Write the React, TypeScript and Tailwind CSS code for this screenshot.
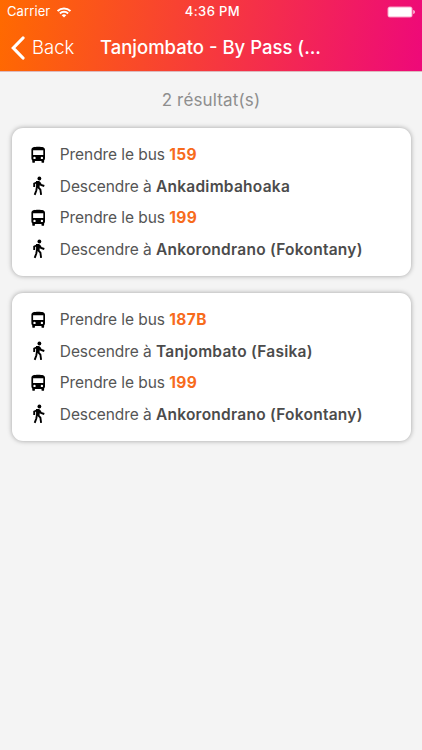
type Step = { type: "bus" | "walk"; name: string };

const routes: Step[][] = [
  [
    { type: "bus", name: "159" },
    { type: "walk", name: "Ankadimbahoaka" },
    { type: "bus", name: "199" },
    { type: "walk", name: "Ankorondrano (Fokontany)" },
  ],
  [
    { type: "bus", name: "187B" },
    { type: "walk", name: "Tanjombato (Fasika)" },
    { type: "bus", name: "199" },
    { type: "walk", name: "Ankorondrano (Fokontany)" },
  ],
];

function BusIcon() {
  return (
    <svg viewBox="0 0 20 20" className="size-5 shrink-0 text-black" fill="currentColor">
      <path
        fillRule="evenodd"
        d="M3.4 4.800C3.400 2.300 6 1.700 10.200 1.700S17 2.300 17 4.800v8.700c0 .8-.4 1.400-.9 1.900v1.500a.9.9 0 0 1-.9.9h-.8a.9.9 0 0 1-.9-.9v-.8H6.900v.8a.9.9 0 0 1-.9.9h-.8a.9.9 0 0 1-.9-.9v-1.500c-.5-.5-.9-1.100-.9-1.900ZM5.100 5.300v4.800h10.200V5.300ZM6.500 11.700a1.200 1.200 0 1 0 0 2.400 1.200 1.200 0 0 0 0-2.400Zm7.400 0a1.200 1.200 0 1 0 0 2.400 1.200 1.200 0 0 0 0-2.400Z"
      />
    </svg>
  );
}

function WalkIcon() {
  return (
    <svg
      viewBox="0 0 20 20"
      className="size-5 shrink-0 text-black"
      fill="none"
      stroke="currentColor"
      strokeWidth="1.9"
    >
      <circle cx="11.4" cy="2.5" r="1.9" fill="currentColor" stroke="none" />
      <path d="M8 5h3l1.4 1.4-1 5.2-3.3.4Z" fill="currentColor" stroke="none" />
      <path d="M9.6 6 6.2 7.5v3.6" />
      <path d="m11 6 2 2.9 3.3 1.1" />
      <path d="m9 10.3-.7 4.2-1.6 4.3" />
      <path d="m9.8 10.9 2.6 2.8.7 5.1" />
    </svg>
  );
}

function StatusBar() {
  return (
    <div className="grid h-6 grid-cols-3 items-center px-[7px] text-white">
      <div className="flex items-center gap-[7px]">
        <span className="text-[13px] tracking-[0.1px]">Carrier</span>
        <svg viewBox="0 0 14 11" className="h-[11px] w-[14px]" fill="none" stroke="currentColor">
          <path d="M.6 4.1a9 9 0 0 1 12.8 0" strokeWidth="1.9" />
          <path d="M2.9 6.5a5.8 5.8 0 0 1 8.2 0" strokeWidth="1.9" />
          <path d="M7 10.6 4.7 8.3a3.3 3.3 0 0 1 4.6 0Z" fill="currentColor" stroke="none" />
        </svg>
      </div>
      <span className="pl-[3px] text-center text-[13px] font-medium tracking-[0.4px]">
        4:36 PM
      </span>
      <svg viewBox="0 0 28 12" className="h-3 w-7 justify-self-end">
        <rect x="0.5" y="0.5" width="25" height="11" rx="2.5" fill="white" fillOpacity="0.6" />
        <rect x="1.5" y="1.5" width="23" height="9" rx="1.2" fill="white" />
        <path d="M26.3 4v4c1-.3 1.5-1.1 1.5-2s-.5-1.7-1.5-2Z" fill="white" fillOpacity="0.85" />
      </svg>
    </div>
  );
}

function Header() {
  return (
    <header className="h-[72px] border-b border-[#dcb9bd] bg-linear-[98deg,#ff6a00,#ee0979]">
      <StatusBar />
      <div className="flex h-[47px] items-center pl-[11px] text-white">
        <button className="flex w-[89px] items-center gap-[7px]">
          <svg viewBox="0 0 14 24" className="h-6 w-[14px]" fill="none">
            <path
              d="M12 2 2.3 12 12 22"
              stroke="currentColor"
              strokeWidth="3.2"
              strokeLinecap="round"
            />
          </svg>
          <span className="text-[18.5px] font-light">Back</span>
        </button>
        <h1 className="text-[18.5px] font-medium whitespace-nowrap">Tanjombato - By Pass (...</h1>
      </div>
    </header>
  );
}

function StepRow({ step }: { step: Step }) {
  const isBus = step.type === "bus";

  return (
    <li className="flex h-[31.5px] items-center gap-[11.9px] text-[15.5px] text-[#555]">
      {isBus ? <BusIcon /> : <WalkIcon />}
      <span className="tracking-[-0.07px] whitespace-nowrap">
        {isBus ? "Prendre le bus " : "Descendre à "}
        <b
          className={
            isBus
              ? "font-bold tracking-[0.4px] text-[#f76b1c]"
              : "font-semibold tracking-[0.25px] text-[#4b4b4b]"
          }
        >
          {step.name}
        </b>
      </span>
    </li>
  );
}

export default function App() {
  return (
    <div className="min-h-[750px] bg-[#f4f4f4] font-['Inter',sans-serif]">
      <Header />
      <main className="pr-[11.5px] pl-[11.5px]">
        <p className="flex h-14 items-center justify-center pt-[2px] text-[17px] tracking-[0.15px] text-[#8e8e8e]">
          2 résultat(s)
        </p>
        <div className="flex flex-col gap-[17px]">
          {routes.map((steps, i) => (
            <ul
              key={i}
              className="h-[148px] rounded-[11px] bg-white pt-[11px] pl-[16.4px] shadow-[0_0_5px_rgba(0,0,0,0.35)]"
            >
              {steps.map((step, j) => (
                <StepRow key={j} step={step} />
              ))}
            </ul>
          ))}
        </div>
      </main>
    </div>
  );
}
